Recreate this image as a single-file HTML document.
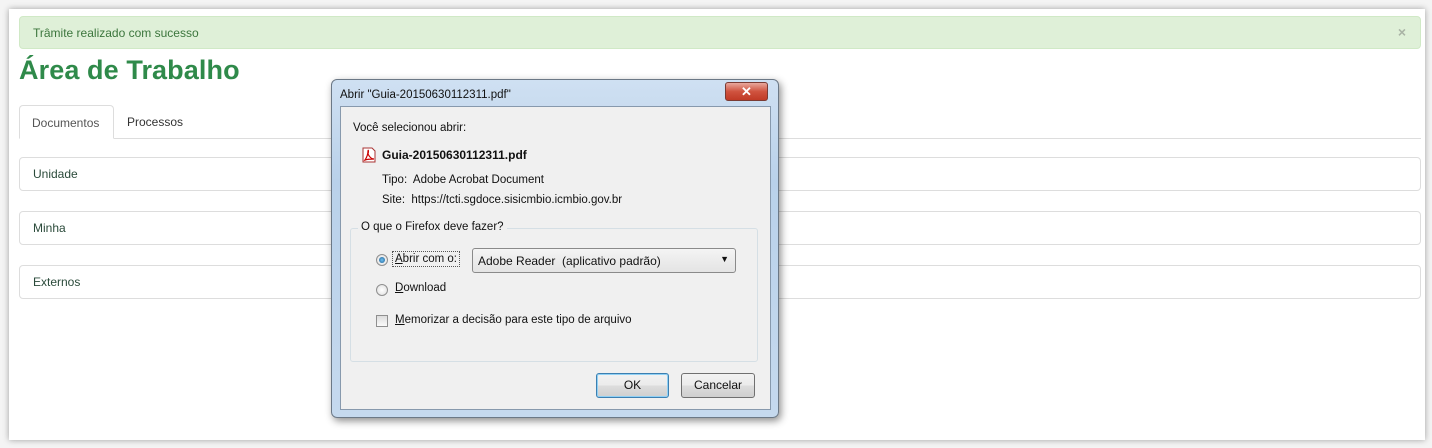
<!DOCTYPE html>
<html><head><meta charset="utf-8"><style>
*{box-sizing:border-box;margin:0;padding:0}
body{width:1432px;height:448px;background:#f4f4f4;position:relative;overflow:hidden;font-family:"Liberation Sans",Arial,sans-serif}
.card{position:absolute;left:9px;top:9px;width:1416px;height:431px;background:#fff;box-shadow:0 0 6px rgba(0,0,0,.35)}
.alert{position:absolute;left:19px;top:16px;width:1402px;height:33px;background:#dff0d8;border:1px solid #d0e9c6;border-radius:4px;color:#3c763d;font-size:12px;padding:9px 13px}
.alert .x{position:absolute;right:14px;top:7px;color:#a9b3a5;font-weight:bold;font-size:14px}
h1{position:absolute;left:19px;top:55px;font-size:27px;color:#2f8a4a;font-weight:bold;letter-spacing:0.1px}
.tabline{position:absolute;left:19px;top:138px;width:1402px;border-top:1px solid #ddd}
.tab{position:absolute;top:105px;height:34px;font-size:12px;color:#333;padding:10px 12px}
.tab.a{left:19px;width:95px;border:1px solid #ddd;border-bottom:1px solid #fff;border-radius:4px 4px 0 0;background:#fff;color:#555}
.panel{position:absolute;left:19px;width:1402px;height:34px;border:1px solid #ddd;border-radius:4px;font-size:12px;color:#2a4a3a;padding:9px 13px}
.dlg{position:absolute;left:331px;top:79px;width:448px;height:339px;border:1px solid #6b7886;border-radius:6px;background:linear-gradient(#cfe0f2,#b9d1ea 30%,#c5d9ee);box-shadow:2px 3px 8px rgba(0,0,0,.45);font-family:"Liberation Sans",Arial,sans-serif;font-size:11.5px;color:#111}
.ttl{position:absolute;left:8px;top:9px;font-size:11.5px}
.close{position:absolute;left:393px;top:2px;width:43px;height:19px;border:1px solid #7a3b34;border-radius:3px;background:linear-gradient(#e8a89c,#d0533f 50%,#c03a26);color:#fff;text-align:center;font-weight:bold;font-size:13px;line-height:17px}
.in{position:absolute;left:8px;top:26px;width:431px;height:304px;background:#f0f0f0;border:1px solid #8799ad}
.grp{position:absolute;left:9px;top:121px;width:408px;height:134px;border:1px solid #d5dfe5;border-radius:3px}
.lg{position:absolute;left:17px;top:114px;background:#f0f0f0;padding:0 3px}
.radio{position:absolute;width:12px;height:12px;border-radius:50%;border:1px solid #8f8f8f;background:radial-gradient(#fff,#ddd)}
.radio.on::after{content:"";position:absolute;left:2px;top:2px;width:6px;height:6px;border-radius:50%;background:radial-gradient(#6fc0f0,#1d5f95)}
.btn{position:absolute;height:25px;border:1px solid #707070;border-radius:3px;background:linear-gradient(#f2f2f2,#ebebeb 50%,#dddddd 51%,#cfcfcf);text-align:center;line-height:23px;font-size:12px}
</style></head><body>
<div class="card"></div>
<div class="alert">Trâmite realizado com sucesso<span class="x">×</span></div>
<h1>Área de Trabalho</h1>
<div class="tabline"></div>
<div class="tab a">Documentos</div>
<div class="tab" style="left:115px">Processos</div>
<div class="panel" style="top:157px">Unidade</div>
<div class="panel" style="top:211px">Minha</div>
<div class="panel" style="top:265px">Externos</div>

<div class="dlg">
 <div class="ttl">Abrir "Guia-20150630112311.pdf"</div>
 <div class="close">✕</div>
 <div class="in">
  <div style="position:absolute;left:12px;top:15px">Você selecionou abrir:</div>
  <svg style="position:absolute;left:21px;top:40px" width="14" height="16" viewBox="0 0 14 16"><path d="M1 1h9l3 3v11H1z" fill="#fff" stroke="#a33"/><path d="M3 13c2-3 3-7 3-9s1 0 0 3c2 4 4 5 6 5c-3 0-6 0-9 1z" fill="none" stroke="#c00" stroke-width="1.2"/></svg>
  <div style="position:absolute;left:41px;top:41px;font-weight:bold;font-size:12px">Guia-20150630112311.pdf</div>
  <div style="position:absolute;left:41px;top:67px">Tipo:&nbsp; Adobe Acrobat Document</div>
  <div style="position:absolute;left:41px;top:87px">Site:&nbsp; https://tcti.sgdoce.sisicmbio.icmbio.gov.br</div>
  <div class="grp"></div>
  <div class="lg">O que o Firefox deve fazer?</div>
  <div class="radio on" style="left:35px;top:147px"></div>
  <div style="position:absolute;left:51px;top:144px;border:1px dotted #555;padding:1px 2px"><u>A</u>brir com o:</div>
  <div style="position:absolute;left:131px;top:141px;width:264px;height:25px;border:1px solid #8a8a8a;border-radius:3px;background:linear-gradient(#f4f4f4,#e4e4e4);padding:5px 5px;font-size:12px">Adobe Reader&nbsp; (aplicativo padrão)<span style="position:absolute;right:6px;top:5px;font-size:9px">▼</span></div>
  <div class="radio" style="left:35px;top:177px"></div>
  <div style="position:absolute;left:54px;top:175px"><u>D</u>ownload</div>
  <div style="position:absolute;left:35px;top:208px;width:12px;height:12px;border:1px solid #8f8f8f;background:linear-gradient(#ddd,#fafafa)"></div>
  <div style="position:absolute;left:54px;top:207px"><u>M</u>emorizar a decisão para este tipo de arquivo</div>
  <div class="btn" style="left:255px;top:266px;width:73px;border-color:#3c7fb1;box-shadow:inset 0 0 0 1px #90d0f4">OK</div>
  <div class="btn" style="left:340px;top:266px;width:74px">Cancelar</div>
 </div>
</div>
</body></html>
